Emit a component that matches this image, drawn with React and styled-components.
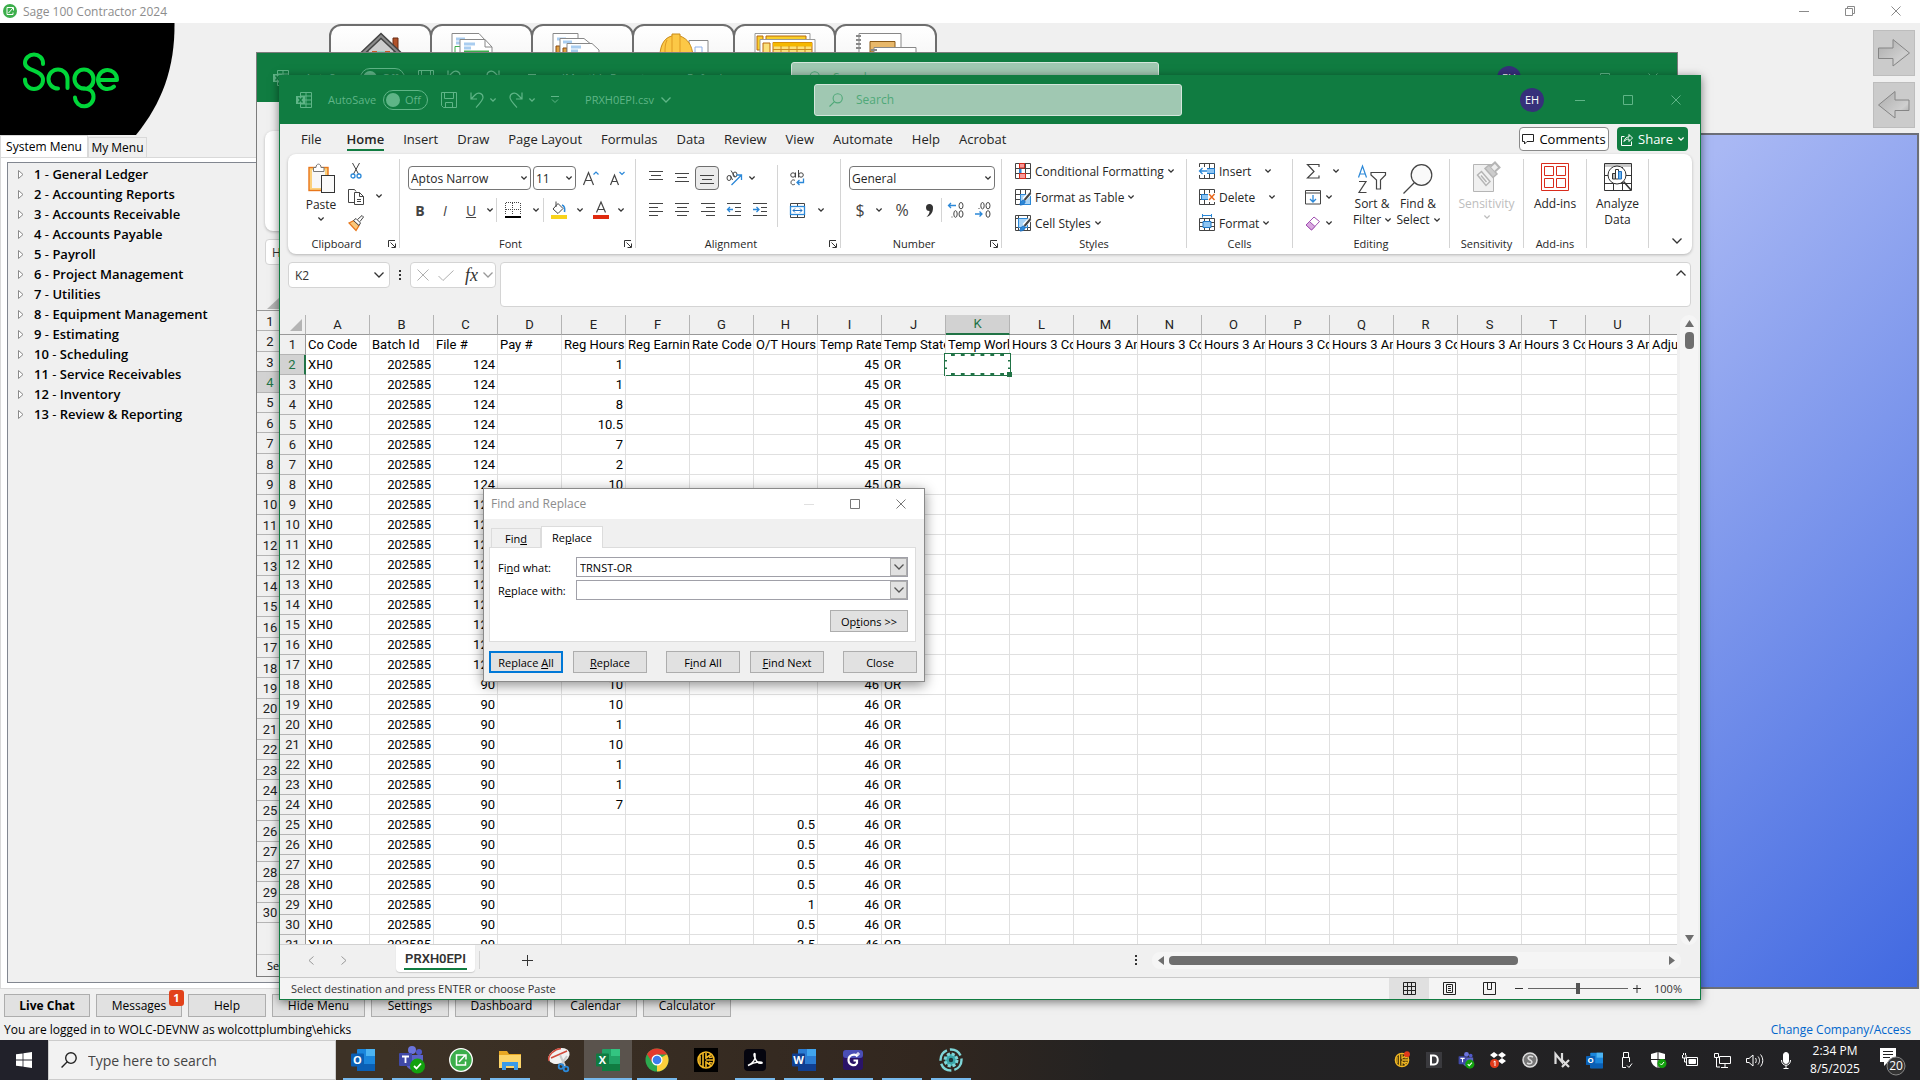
import { useState } from "react";
import styled, { createGlobalStyle, css } from "styled-components";

const UI_FONT = `"Open Sans", "Noto Sans", sans-serif`;
const CELL_FONT = `Roboto, "Liberation Sans", sans-serif`;

const MENU = [
  "General Ledger",
  "Accounting Reports",
  "Accounts Receivable",
  "Accounts Payable",
  "Payroll",
  "Project Management",
  "Utilities",
  "Equipment Management",
  "Estimating",
  "Scheduling",
  "Service Receivables",
  "Inventory",
  "Review & Reporting",
];

const RIBBON_TABS = [
  "File",
  "Home",
  "Insert",
  "Draw",
  "Page Layout",
  "Formulas",
  "Data",
  "Review",
  "View",
  "Automate",
  "Help",
  "Acrobat",
];

const COLUMNS = "ABCDEFGHIJKLMNOPQRSTUV".split("");

const HEADINGS = [
  "Co Code",
  "Batch Id",
  "File #",
  "Pay #",
  "Reg Hours",
  "Reg Earnings",
  "Rate Code",
  "O/T Hours",
  "Temp Rate",
  "Temp State",
  "Temp Work",
  "Hours 3 Code",
  "Hours 3 Amount",
  "Hours 3 Code",
  "Hours 3 Amount",
  "Hours 3 Code",
  "Hours 3 Amount",
  "Hours 3 Code",
  "Hours 3 Amount",
  "Hours 3 Code",
  "Hours 3 Amount",
  "Adjust",
];

const REG_HOURS = [
  1, 1, 8, 10.5, 7, 2, 10, 10, 8, 8, 10, 2, 8, 10, 1, 10, 10, 10, 1, 10, 1, 1, 7,
];
const OT_HOURS = [0.5, 0.5, 0.5, 0.5, 1, 0.5, 3.5];

function buildRows() {
  const rows = [HEADINGS];
  for (let n = 2; n <= 31; n++) {
    const row = COLUMNS.map(() => "");
    row[0] = "XH0";
    row[1] = 202585;
    row[2] = n < 18 ? 124 : 90;
    if (n < 25) row[4] = REG_HOURS[n - 2];
    else row[7] = OT_HOURS[n - 25];
    row[8] = n < 18 ? 45 : 46;
    row[9] = "OR";
    rows.push(row);
  }
  return rows;
}

const ROWS = buildRows();

/* ---------- icons ---------- */

const Svg = styled.svg`
  display: block;
  flex: none;
  overflow: visible;
  fill: none;
  stroke: ${(props) => props.$color || "#444"};
  stroke-width: ${(props) => props.$weight || 1};
`;

function Icon({ w = 16, h, color, weight, children }) {
  return (
    <Svg
      width={w}
      height={h || w}
      viewBox={`0 0 ${w} ${h || w}`}
      $color={color}
      $weight={weight}
      aria-hidden="true"
    >
      {children}
    </Svg>
  );
}

const Chevron = ({ color = "#333", big }) =>
  big ? (
    <Icon w={10} h={6} color={color} weight={1.3}>
      <path d="M0.5 0.5L5 5L9.5 0.5" />
    </Icon>
  ) : (
    <Icon w={6} h={4} color={color} weight={1.3}>
      <path d="M0.4 0.5L3 3.1L5.6 0.5" />
    </Icon>
  );

const MinIcon = ({ color }) => (
  <Icon w={10} color={color}>
    <path d="M0 5.5H10" />
  </Icon>
);
const MaxIcon = ({ color }) => (
  <Icon w={10} color={color}>
    <path d="M0.5 0.5H9.5V9.5H0.5Z" />
  </Icon>
);
const RestoreIcon = ({ color }) => (
  <Icon w={10} color={color}>
    <path d="M0.5 2.5H7.5V9.5H0.5ZM2.5 2V0.5H9.5V7.5H8" />
  </Icon>
);
const CloseIcon = ({ color }) => (
  <Icon w={10} color={color}>
    <path d="M0.5 0.5L9.5 9.5M9.5 0.5L0.5 9.5" />
  </Icon>
);

const ExcelMark = () => (
  <Icon w={16} color="#5fb587">
    <path d="M4.5 0.5H15.5V15.5H4.5V12M4.5 4V0.5M10 0.5V15.5M4.5 4H15.5M9 8H15.5M4.5 12H15.5" />
    <rect x="0" y="4" width="9" height="8" fill="#5fb587" stroke="none" />
    <path d="M2.5 5.5L6.5 10.5M6.5 5.5L2.5 10.5" stroke="#107c41" strokeWidth="1.4" />
  </Icon>
);
const SaveIcon = () => (
  <Icon w={16} color="#5fb587">
    <path d="M0.5 0.5H15.5V15.5H2.5L0.5 13.5ZM3.5 0.5V6.5H12.5V0.5M4.5 15.5V10.5H11.5V15.5" />
  </Icon>
);
const UndoIcon = () => (
  <Icon w={14} h={16} color="#5fb587" weight={1.2}>
    <path d="M1 0.5V7H7M1 7L5.5 2.5C8 0 13 1 13 5.5C13 8 11 10 6 15.5" />
  </Icon>
);
const RedoIcon = () => (
  <Icon w={14} h={16} color="#5fb587" weight={1.2}>
    <path d="M13 0.5V7H7M13 7L8.5 2.5C6 0 1 1 1 5.5C1 8 3 10 8 15.5" />
  </Icon>
);
const CustomizeIcon = () => (
  <Icon w={8} color="#5fb587">
    <path d="M0 0.5H8M1 3.5L4 6.5L7 3.5" />
  </Icon>
);
const SearchIcon = ({ w = 14, color, weight }) => (
  <Svg width={w} height={w} viewBox="0 0 14 14" $color={color} $weight={weight}>
    <circle cx="8.7" cy="5.3" r="4.6" />
    <path d="M5.5 8.6L0.5 13.5" />
  </Svg>
);

const PasteIcon = () => (
  <Icon w={28} h={30} color="#e8761a">
    <rect x="2" y="4.5" width="19" height="23" fill="#fbd07a" strokeWidth="1.4" />
    <rect x="5" y="7" width="13" height="18" fill="#f7f7f7" stroke="none" />
    <path d="M6.5 8.5V4.5H9C9 0 14 0 14 4.5H17V8.5Z" fill="#fff" stroke="#777" />
    <rect x="14.5" y="12.5" width="13" height="17" fill="#fafafa" stroke="#333" />
  </Icon>
);
const CutIcon = () => (
  <Icon w={12} h={16}>
    <path d="M2.5 0L8.5 11M9.5 0L3.5 11" />
    <circle cx="3" cy="13" r="2" stroke="#2b88d8" strokeWidth="1.3" />
    <circle cx="9" cy="13" r="2" stroke="#2b88d8" strokeWidth="1.3" />
  </Icon>
);
const CopyIcon = () => (
  <Icon w={16}>
    <path d="M6 13.5H0.5V0.5H6.5L8 2.5" />
    <path d="M6.5 3.5H11.5L15.5 7.5V15.5H6.5ZM11.5 3.5V7.5H15.5M9 10.5H13M9 12.5H13" />
  </Icon>
);
const BrushIcon = () => (
  <Icon w={16}>
    <path d="M1 8L6 5.5L11 10.5L8 15.5Z" fill="#fbc77a" stroke="#e8761a" strokeWidth="1.3" />
    <path d="M5.5 5.5L8 3.5L12.5 8L11 10.5Z" fill="#fff" />
    <path d="M9.5 4.5L14 0.5L15.5 2L12 6.5" />
  </Icon>
);
const GrowA = () => (
  <Icon w={16} weight={1.2}>
    <path d="M0.5 15L5.5 2.5L10.5 15M2.5 10.5H8.5" />
    <path d="M10.5 4.5L13 2L15.5 4.5" stroke="#2b88d8" />
  </Icon>
);
const ShrinkA = () => (
  <Icon w={16} weight={1.2}>
    <path d="M1.5 15L5.5 5L9.5 15M3 11.5H8" />
    <path d="M10.5 2L13 4.5L15.5 2" stroke="#2b88d8" />
  </Icon>
);
const BordersIcon = () => (
  <Icon w={16}>
    <path d="M0.5 1V13M15.5 1V13M1 0.5H15M7.5 1V13M1 7.5H15" strokeDasharray="1 1" />
    <path d="M0 15H16" stroke="#000" strokeWidth="2" />
  </Icon>
);
const BucketIcon = () => (
  <Icon w={16} h={18}>
    <path d="M2 8L7 2.5L12 7.5L7 12.5ZM5 0.5V6" />
    <path d="M11 4C14 5 14 8 13.5 11" stroke="#2b88d8" strokeWidth="1.6" />
    <rect x="0" y="14" width="16" height="4" fill="#f9d31c" stroke="none" />
  </Icon>
);
const FontColorIcon = () => (
  <Icon w={16} h={18}>
    <path d="M3.5 11.5L8 1L12.5 11.5M5 8.5H11" strokeWidth="1.2" />
    <rect x="0" y="14" width="16" height="4" fill="#e02b0f" stroke="none" />
  </Icon>
);

// Horizontal strokes of an alignment glyph, each given as [start, end]
const Lines = ({ rows, top = 0, gap = 4 }) => (
  <Icon w={14} h={14}>
    {rows.map(([a, b], i) => (
      <path key={i} d={`M${a} ${top + i * gap + 0.5}H${b}`} />
    ))}
  </Icon>
);
const MIDDLE = [[0, 14], [2, 12], [0, 14]];
const LEFT = [[0, 14], [0, 9], [0, 14], [0, 9]];
const CENTER = [[0, 14], [2, 12], [0, 14], [2, 12]];
const RIGHT = [[0, 14], [5, 14], [0, 14], [5, 14]];

const OrientIcon = () => (
  <Icon w={16}>
    <ellipse cx="3" cy="8" rx="2" ry="2.5" />
    <path d="M4.5 5.5L6.5 10M5 0.5L9 7" />
    <ellipse cx="9" cy="4.5" rx="2" ry="2.5" />
    <path d="M5.5 15L15 5.5M10.5 5H15.5V10" stroke="#2b88d8" strokeWidth="1.3" />
  </Icon>
);
const WrapIcon = () => (
  <Icon w={14} h={16}>
    <ellipse cx="3" cy="5" rx="2.3" ry="2.2" />
    <path d="M5.5 2.5V7.5M8.5 0V7.5M5 10.5C3 9 1 10.5 1 12.5S3 15.5 5 14" />
    <ellipse cx="11" cy="5" rx="2.3" ry="2.2" />
    <path d="M13.5 8.5V12.5H7M9.5 10L7 12.5L9.5 15" stroke="#2b88d8" strokeWidth="1.3" />
  </Icon>
);
const IndentIcon = ({ flip }) => (
  <Icon w={14}>
    <path d="M0 0.5H14M8 4.5H14M8 8.5H14M0 12.5H14" />
    <path
      d={flip ? "M0 6.5H6M3.5 4L6 6.5L3.5 9" : "M0.5 6.5H6M3 4L0.5 6.5L3 9"}
      stroke="#2b88d8"
      strokeWidth="1.3"
    />
  </Icon>
);
const MergeIcon = () => (
  <Icon w={15}>
    <path d="M0.5 0.5H14.5V14.5H0.5ZM7.5 0.5V3.5M7.5 11.5V14.5" />
    <rect x="0.5" y="3.5" width="14" height="8" fill="#fff" stroke="#2b88d8" strokeWidth="1.3" />
    <path d="M3 7.5H12M5 5.5L3 7.5L5 9.5M10 5.5L12 7.5L10 9.5" stroke="#1f6fc0" />
  </Icon>
);
const DecimalIcon = ({ less }) => (
  <Icon w={16}>
    {less ? (
      <>
        <path d="M0 12H7M4.5 9.5L7 12L4.5 14.5" stroke="#2b88d8" strokeWidth="1.3" />
        <ellipse cx="13" cy="12" rx="2" ry="3.3" />
        <ellipse cx="7.5" cy="3.7" rx="1.7" ry="3.2" />
        <ellipse cx="13" cy="3.7" rx="2" ry="3.2" />
        <path d="M3.5 6.5H4.5" />
      </>
    ) : (
      <>
        <path d="M0.5 3.5H8M3 1L0.5 3.5L3 6" stroke="#2b88d8" strokeWidth="1.3" />
        <ellipse cx="13" cy="3.7" rx="2" ry="3.2" />
        <ellipse cx="7.5" cy="12" rx="1.7" ry="3.3" />
        <ellipse cx="13" cy="12" rx="2" ry="3.3" />
        <path d="M3.5 15H4.5" />
      </>
    )}
  </Icon>
);
const GridBase = () => (
  <path d="M0.5 0.5H15.5V15.5H0.5ZM5.5 0.5V15.5M10.5 0.5V15.5M0.5 5.5H15.5M0.5 10.5H15.5" />
);
const CondIcon = () => (
  <Icon w={16}>
    <GridBase />
    <path d="M4.5 0.5H9.5V5H4.5ZM4.5 10.5H10.5V15.5H4.5Z" fill="#f79a9a" stroke="#d92b1c" />
    <path d="M4 6H6.5V10H4Z" fill="#2b88d8" stroke="none" />
  </Icon>
);
const PaintTableIcon = ({ full }) => (
  <Icon w={16}>
    {full ? (
      <path d="M0.5 0.5H15.5V15.5H0.5ZM0.5 3.5H15.5M3.5 0.5V15.5M12.5 0.5V15.5M0.5 12.5H15.5" />
    ) : (
      <GridBase />
    )}
    <path
      d={full ? "M3.5 3.5H12.5V12.5H3.5Z" : "M5.5 5.5H15.5V15.5H5.5Z"}
      fill="#a9d3f5"
      stroke="#2b88d8"
    />
    <path d="M15.5 4L9 10.5" stroke="#fff" strokeWidth="4" />
    <path d="M15.5 4L9.5 11" strokeWidth="2" />
    <path d="M5 16C5 13 7 10.5 9.5 11.5C11 13.5 9 16 5 16Z" fill="#2b88d8" stroke="#1f6fc0" />
  </Icon>
);
const CellInsertIcon = () => (
  <Icon w={16}>
    <GridBase />
    <path d="M6 5.5H15.5V10.5H6Z" fill="#8ec5f2" stroke="#1f78c8" />
    <path d="M0 4H8V12H0Z" fill="#fff" stroke="none" />
    <path d="M0.5 8H8M3.5 5L0.5 8L3.5 11" stroke="#2b88d8" strokeWidth="1.3" />
  </Icon>
);
const CellDeleteIcon = () => (
  <Icon w={16}>
    <GridBase />
    <path d="M2.5 5.5H9.5V10.5H2.5Z" fill="#8ec5f2" stroke="#1f78c8" />
    <path d="M9 4H16V13H9Z" fill="#fff" stroke="none" />
    <path d="M10 5L15.5 11M15.5 5L10 11" stroke="#e8661a" strokeWidth="1.4" />
  </Icon>
);
const CellFormatIcon = () => (
  <Icon w={16} h={18}>
    <path d="M0.5 4.5H15.5V16.5H0.5ZM5.5 4.5V16.5M10.5 4.5V16.5M0.5 8.5H15.5M0.5 12.5H15.5" />
    <path d="M4 7.5H12V13.5H4Z" fill="#8ec5f2" stroke="#1f78c8" />
    <path d="M3.5 1.5H12.5M3.5 0V3.5M12.5 0V3.5" stroke="#2b88d8" />
  </Icon>
);
const SumIcon = () => (
  <Icon w={13} h={15} weight={1.2}>
    <path d="M12 3V0.5H0.5L7 7.5L0.5 14H12V11.5" />
  </Icon>
);
const FillIcon = () => (
  <Icon w={16} h={15}>
    <path d="M0.5 0.5H15.5V14H0.5ZM0.5 3H15.5" />
    <path d="M8 5V12M5 9L8 12L11 9" stroke="#2b88d8" strokeWidth="1.3" />
  </Icon>
);
const EraserIcon = () => (
  <Icon w={16} h={15} color="#a04fb0">
    <path d="M1 9L9 1L14.5 5.5L6.5 14Z" fill="#fff" />
    <path d="M1 9L4.5 5.5L10 10.5L6.5 14Z" fill="#d9a8e0" />
  </Icon>
);
const SortIcon = () => (
  <Icon w={28} h={29} weight={1.2}>
    <path d="M0.5 12.5L4.5 1L8.5 12.5M2 9H7.5" stroke="#2b88d8" />
    <path d="M1 16.5H8L1 27.5H8.5" />
    <path d="M13 7.5H27.5V10L22.5 15V24H18.5V15L13 10Z" />
  </Icon>
);
const FindIcon = () => (
  <Icon w={30} h={30} weight={1.2}>
    <circle cx="18.5" cy="11" r="10.3" fill="#fafafa" />
    <path d="M11.5 18.5L0.5 29.5" />
  </Icon>
);
const SensitivityIcon = () => (
  <Icon w={28} h={32} color="#b5b5b5">
    <path d="M0.5 3.5H20.5V30.5H0.5Z" fill="#f0f0f0" />
    <path d="M4.5 14L8.5 10.5L17 20.5L13 24.5Z" fill="#f4f4f4" strokeWidth="1.5" />
    <path d="M8 14.5L13.5 21" strokeWidth="1.5" />
    <path d="M12 7.5L16 4L24 13L20 16.5Z" fill="#ccc" strokeWidth="1.5" />
    <path d="M17.5 5.5L22 1.5L26.5 6.5L22 10.5" fill="#eee" strokeWidth="2" />
  </Icon>
);
const AddinsIcon = () => (
  <Icon w={28} color="#d92b1c">
    <path d="M0.5 0.5H27.5V27.5H0.5ZM3.5 3.5H12.5V12.5H3.5ZM15.5 3.5H24.5V12.5H15.5ZM3.5 15.5H12.5V24.5H3.5ZM15.5 15.5H24.5V24.5H15.5Z" />
  </Icon>
);
const AnalyzeIcon = () => (
  <Icon w={28} color="#333">
    <path d="M0.5 0.5H27.5V27.5H0.5ZM0.5 12.5H27.5M0.5 20.5H27.5M9.5 4V27M18.5 4V27" />
    <rect x="1" y="1" width="26" height="3" fill="#c8c8c8" stroke="none" />
    <circle cx="13" cy="12" r="9" fill="#fff" />
    <path d="M19.5 18.5L27 27" strokeWidth="1.6" />
    <path d="M8.5 10.5H11.5V16H8.5Z" fill="#bbb" />
    <path d="M11.5 6.5H14.5V16H11.5Z" fill="#fff" />
    <path d="M14.5 8.5H17.5V16H14.5Z" fill="#6bb5f0" stroke="#1f6fc0" />
  </Icon>
);
const LauncherIcon = () => (
  <Icon w={8} color="#333">
    <path d="M0.5 7V0.5H7M2.5 2.5L7 7M7.5 3.5V7.5H3.5" />
  </Icon>
);
const CommentIcon = () => (
  <Icon w={12} h={11} color="#222">
    <path d="M0.5 0.5H11.5V7.5H5L2.5 10V7.5H0.5Z" />
  </Icon>
);
const ShareIcon = () => (
  <Icon w={12} h={13} color="#fff">
    <path d="M3.5 3.5H0.5V12.5H10.5V8.5" />
    <path d="M3 8.5C3.5 5.5 5.5 4 8 4V1.5L11.5 5L8 8.5V6C6 6 4.5 6.5 3 8.5Z" />
  </Icon>
);
const DotsIcon = () => (
  <Icon w={2} h={10} color="none">
    <path d="M0 0H2V2H0ZM0 4H2V6H0ZM0 8H2V10H0Z" fill="#333" />
  </Icon>
);

const SageMark = () => (
  <Icon w={14} color="#fff">
    <circle cx="7" cy="7" r="7" fill="#3cae4b" stroke="none" />
    <path d="M8.5 3.5H4V10.5H10V8.5M5.5 9L10 4M7.5 3.5H10.5V6.5" />
  </Icon>
);

const SageLogo = () => (
  <Icon w={175} h={112} color="#00d639">
    <path d="M0 0H174.5C175 45 162 80 136 112H0Z" fill="#000" stroke="none" />
    <g strokeWidth="4" strokeLinecap="round" strokeLinejoin="round">
      <path d="M43 41V40A9 8.5 0 0 0 25 40C25 48.5 43 46.5 43 57A9 9 0 0 1 25 57V56.5" />
      <path d="M67.5 65V56A9.5 9.5 0 1 0 58 65.5" />
      <path d="M84 65.5A9.5 9.5 0 1 1 93.5 56C93.5 60 91.5 63.5 88 65" />
      <path d="M84 65.5C90 65.5 93.5 69 93.5 73.5A9 9 0 0 1 75 74.5" />
      <path d="M100 57H117A9.5 9.5 0 1 0 114 63.5" />
    </g>
  </Icon>
);

const ArrowArt = ({ flip }) => (
  <Icon w={32} h={28} color="#858585">
    <defs>
      <linearGradient id="arrowFill" x1="0" y1="0" x2="1" y2="1">
        <stop offset="0" stopColor="#ababab" />
        <stop offset="0.7" stopColor="#cfcfcf" />
        <stop offset="1" stopColor="#9c9c9c" />
      </linearGradient>
    </defs>
    <path
      d={
        flip
          ? "M31 9H17V0.5L0.5 14L17 27V19.5H31Z"
          : "M0.5 9H15V0.5L31.5 14L15 27V19.5H0.5Z"
      }
      fill="url(#arrowFill)"
    />
  </Icon>
);

/* ---------- page and Sage window ---------- */

const GlobalStyle = createGlobalStyle`
  * {
    box-sizing: border-box;
  }
  body {
    margin: 0;
    overflow: hidden;
    font-family: ${UI_FONT};
    font-size: 12px;
    color: #000;
  }
  button, input, select {
    font: inherit;
    color: inherit;
    padding: 0;
    margin: 0;
  }
`;

const Desktop = styled.div`
  position: relative;
  height: 100vh;
  display: flex;
  flex-direction: column;
  background: #f0f0f0;
`;

const PlainButton = styled.button`
  border: 0;
  background: none;
  display: flex;
  align-items: center;
  justify-content: center;
`;

const SageTitle = styled.header`
  height: 23px;
  flex: none;
  display: flex;
  align-items: center;
  gap: 6px;
  padding: 0 1px 1px 3px;
  background: #fff;
  color: #8c8c8c;
`;

const WindowButtons = styled.div`
  margin-left: auto;
  display: flex;
  align-self: stretch;
  ${PlainButton} {
    width: ${(props) => props.$w}px;
  }
`;

const SageHeader = styled.div`
  height: 110px;
  flex: none;
  display: flex;
`;

const Shortcuts = styled.div`
  display: flex;
  margin-left: 154px;
  padding-top: 1px;
`;

const Shortcut = styled(PlainButton)`
  width: 103px;
  margin-right: -2px;
  height: 104px;
  border: 2px solid #6e6e6e;
  border-radius: 12px 12px 0 0;
  background: linear-gradient(#fff, #e4e4e4);
  align-items: flex-start;
  padding-top: 6px;
`;

const Arrows = styled.div`
  margin-left: auto;
  padding: 7px 5px 0 0;
  display: flex;
  flex-direction: column;
  gap: 6px;
`;

const ArrowButton = styled(PlainButton)`
  width: 42px;
  height: 46px;
  background: #cbcbcb;
  border: 1px solid #bdbdbd;
`;

const SageBody = styled.div`
  flex: 1;
  min-height: 0;
  display: flex;
`;

const Side = styled.nav`
  width: 300px;
  flex: none;
  padding-top: 2px;
  display: flex;
  flex-direction: column;
`;

const SideTabs = styled.div`
  display: flex;
  align-items: flex-end;
  height: 22px;
`;

const SideTab = styled.button`
  height: ${(props) => (props.$active ? 22 : 20)}px;
  width: ${(props) => (props.$active ? 88 : 59)}px;
  border: 1px solid #d9d9d9;
  border-bottom: 0;
  background: ${(props) => (props.$active ? "#fff" : "#f0f0f0")};
  white-space: nowrap;
`;

const SidePage = styled.div`
  flex: 1;
  border: 1px solid #d9d9d9;
  background: #fff;
  padding: 4px 0 5px 6px;
  display: flex;
`;

const Tree = styled.ul`
  flex: 1;
  list-style: none;
  margin: 0;
  padding: 1px 0 0 10px;
  border: 1px solid #828790;
  background: #f0f0f0;
`;

const TreeItem = styled.li`
  height: 20px;
  display: flex;
  align-items: center;
  gap: 10px;
  font-size: 13px;
  font-weight: 600;
  white-space: pre;
  span {
    font-weight: 400;
  }
`;

const Canvas = styled.main`
  flex: 1;
  border: 2px solid #6c6f78;
  margin-right: 1px;
  background: linear-gradient(135deg, #a9b8f4 58%, #4169e1);
`;

const Footer = styled.div`
  flex: none;
  height: 51px;
  padding: 5px 4px 0;
`;

const FooterButtons = styled.div`
  display: flex;
  gap: 6px;
`;

const FooterButton = styled.button`
  position: relative;
  width: ${(props) => props.$w}px;
  height: 23px;
  border: 1px solid #adadad;
  background: #e1e1e1;
  font-weight: ${(props) => (props.$bold ? 700 : 400)};
`;

const Badge = styled.span`
  position: absolute;
  top: -5px;
  right: -3px;
  width: 15px;
  height: 16px;
  border-radius: 3px;
  background: #e2421b;
  color: #fff;
  font-size: 11px;
  line-height: 16px;
  font-weight: 700;
`;

const LoginLine = styled.div`
  display: flex;
  justify-content: space-between;
  padding-right: 5px;
  line-height: 25px;
  a {
    color: #0066cc;
    text-decoration: none;
  }
`;

/* ---------- Excel windows ---------- */

const ExcelWindow = styled.section`
  position: absolute;
  display: flex;
  flex-direction: column;
  background: #f0f0f0;
  ${(props) =>
    props.$back
      ? css`
          top: 52px;
          left: 256px;
          right: 242px;
          bottom: 103px;
          border: 1px solid #7c7c7c;
        `
      : css`
          top: 75px;
          left: 279px;
          right: 219px;
          bottom: 80px;
          border: 1px solid #107c41;
          border-top: 0;
          box-shadow: 0 2px 9px rgba(0, 0, 0, 0.5);
        `}
`;

const Title = styled.header`
  height: 49px;
  flex: none;
  display: flex;
  align-items: center;
  background: #107c41;
  color: #5fb587;
`;

const TitleLeft = styled.div`
  flex: 0 0 534px;
  display: flex;
  align-items: center;
  padding-left: 16px;
`;

const AutoSave = styled.label`
  display: flex;
  align-items: center;
  gap: 7px;
  margin: 0 13px 0 16px;
  font-size: 11px;
`;

const Toggle = styled.button`
  width: 45px;
  height: 20px;
  border: 1px solid #5fb587;
  border-radius: 10px;
  background: none;
  display: flex;
  align-items: center;
  gap: 5px;
  padding-left: 2px;
  &::before {
    content: "";
    width: 14px;
    height: 14px;
    border-radius: 50%;
    background: #5fb587;
  }
`;

const TitleTool = styled(PlainButton)`
  width: 26px;
  height: 24px;
  margin-left: 7px;
`;

const SaveTool = styled(PlainButton)`
  height: 24px;
`;

const FileName = styled.span`
  display: flex;
  align-items: center;
  gap: 7px;
  margin-left: 17px;
  font-size: 11px;
  white-space: nowrap;
`;

const TitleSearch = styled.label`
  flex: 0 1 368px;
  height: 32px;
  display: flex;
  align-items: center;
  gap: 13px;
  padding: 0 14px;
  border: 1px solid #d4e6dc;
  border-radius: 3px;
  background: #a0c8b2;
  input {
    flex: 1;
    min-width: 0;
    border: 0;
    background: none;
    outline: 0;
    &::placeholder {
      color: #4fa878;
      opacity: 1;
    }
  }
`;

const Avatar = styled.span`
  margin: 0 12px 0 auto;
  width: 24px;
  height: 24px;
  border-radius: 50%;
  background: #36307a;
  color: #fff;
  font-size: 11px;
  line-height: 24px;
  text-align: center;
`;

const ExcelButtons = styled(WindowButtons)`
  margin-left: 0;
`;

const TabsBar = styled.nav`
  height: 30px;
  flex: none;
  display: flex;
  align-items: center;
  gap: 19px;
  padding: 0 12px 0 21px;
`;

const RibbonTab = styled.button`
  border: 0;
  background: none;
  height: 24px;
  padding-top: 2px;
  font-size: 13px;
  color: #242424;
  white-space: nowrap;
  border-bottom: 2px solid ${(props) => (props.$active ? "#107c41" : "transparent")};
  font-weight: ${(props) => (props.$active ? 600 : 400)};
  &:first-child {
    margin-right: 6px;
  }
`;

const TopAction = styled(PlainButton)`
  height: 24px;
  gap: 5px;
  border-radius: 4px;
  font-size: 13px;
  ${(props) =>
    props.$share
      ? css`
          width: 71px;
          background: #107c41;
          color: #fff;
        `
      : css`
          width: 90px;
          margin: 0 -11px 0 auto;
          background: #fff;
          border: 1px solid #8a8a8a;
        `}
`;

const Ribbon = styled.div`
  flex: none;
  height: 100px;
  margin: 0 8px;
  display: flex;
  background: #fff;
  border-radius: 8px;
  box-shadow: 0 1px 3px rgba(0, 0, 0, 0.25);
`;

const Group = styled.div`
  position: relative;
  width: ${(props) => props.$w}px;
  flex: none;
  margin: 5px 0 6px;
  border-right: 1px solid #d4d4d4;
  display: flex;
  justify-content: ${(props) => props.$justify || "flex-start"};
  color: #262626;
`;

const GroupName = styled.span`
  position: absolute;
  left: 0;
  right: ${(props) => (props.$launcher ? 14 : 0)}px;
  bottom: -4px;
  line-height: 16px;
  font-size: 11px;
  text-align: center;
`;

const Launcher = styled(PlainButton)`
  position: absolute;
  right: 3px;
  bottom: 0;
`;

const ToolColumn = styled.div`
  display: flex;
  flex-direction: column;
  gap: ${(props) => props.$gap || 0}px;
  padding: ${(props) => props.$pad || "7px 0 0 8px"};
`;

const ToolRow = styled.div`
  display: flex;
  flex: none;
  align-items: center;
  height: 24px;
`;

const Tool = styled(PlainButton)`
  flex: none;
  width: ${(props) => props.$w || 26}px;
  height: 24px;
  font-size: ${(props) => props.$size || 14}px;
  color: #444;
  ${(props) =>
    props.$on &&
    css`
      background: #ebebeb;
      border: 1px solid #6e6e6e;
      border-radius: 4px;
    `}
`;

const Rule = styled.span`
  width: 1px;
  height: ${(props) => props.$h || 24}px;
  background: #d4d4d4;
`;

const BigTool = styled.button`
  width: ${(props) => props.$w}px;
  margin-left: ${(props) => props.$left || 0}px;
  border: 0;
  background: none;
  display: flex;
  flex-direction: column;
  align-items: center;
  padding-top: ${(props) => props.$top || 4}px;
  gap: ${(props) => props.$gap || 4}px;
  line-height: 16px;
  color: ${(props) => (props.$off ? "#bdbdbd" : "#262626")};
  span {
    display: flex;
    align-items: center;
    gap: 4px;
    white-space: nowrap;
  }
`;

const TextTool = styled.button`
  display: flex;
  flex: none;
  align-items: center;
  gap: 4px;
  height: 24px;
  border: 0;
  background: none;
  white-space: nowrap;
  svg + span {
    min-width: ${(props) => props.$min || 0}px;
    text-align: left;
  }
`;

const SelectBox = styled.span`
  display: flex;
  align-items: center;
  width: ${(props) => props.$w}px;
  height: 24px;
  margin-right: 2px;
  padding: 0 3px 0 2px;
  border: 1px solid #767676;
  border-radius: 4px;
  background: #fff;
  select {
    appearance: none;
    flex: 1;
    min-width: 0;
    border: 0;
    background: none;
    outline: 0;
  }
`;

const CollapseRibbon = styled(PlainButton)`
  margin: auto 10px 10px auto;
`;

const FormulaRow = styled.div`
  flex: none;
  display: flex;
  align-items: flex-start;
  padding: 8px 9px 8px 8px;
`;

const FieldBox = styled.div`
  width: ${(props) => props.$w || 102}px;
  flex: none;
  height: 26px;
  display: flex;
  align-items: center;
  border: 1px solid #d4d4d4;
  border-radius: 4px;
  background: #fff;
  padding: ${(props) => (props.$tight ? "0 0 0 6px" : "0 5px 0 6px")};
  input {
    flex: 1;
    min-width: 0;
    border: 0;
    outline: 0;
    color: #333;
  }
`;

const FxIcon = styled.i`
  flex: none;
  width: 17px;
  text-align: center;
  font-family: "Liberation Serif", serif;
  font-size: 18px;
  line-height: 20px;
  color: #333;
`;

const Dots = styled.span`
  flex: none;
  width: ${(props) => props.$w || 20}px;
  height: 26px;
  display: flex;
  align-items: center;
  justify-content: center;
`;

const FormulaInput = styled.label`
  flex: 1;
  height: 45px;
  margin-left: 4px;
  display: flex;
  align-items: flex-start;
  border: 1px solid #d4d4d4;
  border-radius: 4px;
  background: #fff;
  padding: 7px 4px 0 6px;
  input {
    flex: 1;
    border: 0;
    outline: 0;
  }
`;

const SheetArea = styled.div`
  flex: 1;
  min-height: 0;
  display: flex;
`;

const SheetClip = styled.div`
  flex: 1;
  min-width: 0;
  overflow: hidden;
  background: #fff;
  border-bottom: 1px solid #d0d0d0;
`;

const Sheet = styled.table`
  table-layout: fixed;
  border-collapse: separate;
  border-spacing: 0;
  width: 1434px;
  font-family: ${CELL_FONT};
  font-size: 13px;
  line-height: 18px;
  col {
    width: 64px;
  }
  col:first-child {
    width: 26px;
  }
`;

const ColHead = styled.th`
  height: 20px;
  padding: 0;
  line-height: 18px;
  font-weight: 400;
  background: ${(props) => (props.$on ? "#d2d2d2" : "#f0f0f0")};
  color: ${(props) => (props.$on ? "#217346" : "#222")};
  border-right: 1px solid #b4b4b4;
  border-bottom: ${(props) => (props.$on ? "2px solid #217346" : "1px solid #999")};
`;

const RowHead = styled(ColHead)`
  padding-top: 1px;
  border-bottom: 1px solid #b4b4b4;
  border-right: ${(props) => (props.$on ? "2px solid #217346" : "1px solid #999")};
`;

const Cell = styled.td`
  position: relative;
  height: 20px;
  padding: 1px 2px 0;
  overflow: hidden;
  white-space: nowrap;
  text-align: ${(props) => (props.$num ? "right" : "left")};
  border-right: 1px solid #e0e0e0;
  border-bottom: 1px solid #e0e0e0;
  ${(props) =>
    props.$picked &&
    css`
      overflow: visible;
      &::before {
        content: "";
        position: absolute;
        inset: -2px;
        border: 3px solid #217346;
      }
      &::after {
        content: "";
        position: absolute;
        inset: -1px;
        border: 2px dashed #fff;
      }
    `}
`;

const FillHandle = styled.span`
  position: absolute;
  z-index: 1;
  right: -3px;
  bottom: -3px;
  width: 5px;
  height: 5px;
  background: #217346;
`;

const VScroll = styled.div`
  width: 18px;
  margin: 0 2px 0 3px;
  display: flex;
  flex-direction: column;
  align-items: center;
  justify-content: space-between;
  padding: 5px 0 3px;
  background: #f5f5f5;
  border-radius: 9px;
`;

const VThumb = styled.div`
  width: 9px;
  height: 17px;
  border-radius: 4px;
  background: #6e6e6e;
  margin: 5px 0 auto;
`;

const TabStrip = styled.div`
  flex: none;
  height: 32px;
  display: flex;
  align-items: center;
  padding: 0 19px 2px 28px;
`;

const SheetTab = styled.button`
  align-self: flex-start;
  width: 79px;
  height: 27px;
  margin: 0 4px 0 49px;
  padding: 1px 8px 0;
  border: 0;
  border-radius: 0 0 4px 4px;
  background: #fff;
  box-shadow: 0 1px 1px #ccc;
  color: #333;
  span {
    display: block;
    border-bottom: 2px solid #107c41;
    font-family: ${CELL_FONT};
    font-size: 13px;
    font-weight: 600;
    line-height: 19px;
  }
`;

const NewSheet = styled(PlainButton)`
  margin: 0 auto 0 42px;
`;

const HScroll = styled.div`
  flex: 0 1 529px;
  height: 17px;
  display: flex;
  align-items: center;
  padding: 0 6px;
  border-radius: 8px;
  background: #f5f5f5;
  div {
    width: 349px;
    height: 9px;
    margin: 0 auto 0 5px;
    border-radius: 4px;
    background: #6e6e6e;
  }
`;

const StatusBar = styled.footer`
  flex: none;
  height: 22px;
  display: flex;
  align-items: center;
  padding: 0 18px 0 11px;
  border-top: 1px solid #c8c8c8;
  background: #f4f4f4;
  font-size: 11px;
  color: #333;
`;

const StatusTools = styled.div`
  margin-left: auto;
  align-self: stretch;
  display: flex;
  align-items: center;
`;

const ViewButton = styled(PlainButton)`
  width: 40px;
  align-self: stretch;
  background: ${(props) => (props.$on ? "#e0e0e0" : "none")};
`;

const ZoomBox = styled.div`
  display: flex;
  align-items: center;
  gap: 5px;
  margin: 0 13px 0 6px;
`;

const ZoomRange = styled.input`
  appearance: none;
  width: 100px;
  height: 17px;
  background: linear-gradient(#666, #666) center / 100% 1px no-repeat;
  &::-webkit-slider-thumb {
    appearance: none;
    width: 4px;
    height: 11px;
    background: #555;
  }
`;

/* ---------- what shows of the back window ---------- */

const BackRibbon = styled.div`
  height: 100px;
  margin: 29px 8px 0;
  border-radius: 8px;
  background: #fff;
  box-shadow: 0 1px 3px rgba(0, 0, 0, 0.25);
  flex: none;
`;

const BackRows = styled.ol`
  list-style: none;
  margin: 0;
  padding: 0;
  width: 26px;
  height: 612px;
  flex: none;
  display: flex;
  flex-direction: column;
  font-family: ${CELL_FONT};
  font-size: 13px;
`;

const BackRow = styled.li`
  flex: 1;
  display: flex;
  align-items: center;
  justify-content: center;
  padding-top: 1px;
  border-bottom: 1px solid #b4b4b4;
  background: ${(props) => (props.$on ? "#d2d2d2" : "#f0f0f0")};
  color: ${(props) => (props.$on ? "#217346" : "#222")};
`;

const BackCorner = styled.div`
  height: 38px;
  flex: none;
  padding: 24px 0 0 10px;
  border-bottom: 1px solid #999;
`;

const BackStatus = styled.div`
  margin-top: auto;
  height: 22px;
  padding-left: 10px;
  line-height: 21px;
  border-top: 1px solid #c8c8c8;
  font-size: 11px;
`;

/* ---------- dialog ---------- */

const Dialog = styled.form`
  position: absolute;
  left: 483px;
  top: 488px;
  width: 442px;
  background: #f0f0f0;
  border: 1px solid #8a8a8a;
  box-shadow: 0 3px 12px rgba(0, 0, 0, 0.45);
  font-size: 11px;
`;

const DialogTitle = styled.div`
  height: 30px;
  display: flex;
  align-items: center;
  padding: 0 0 1px 7px;
  background: #fff;
  color: #8c8c8c;
  font-size: 12px;
`;

const DialogTabs = styled.div`
  display: flex;
  align-items: flex-end;
  height: 28px;
  padding-left: 7px;
`;

const DialogTab = styled.button`
  height: ${(props) => (props.$active ? 22 : 19)}px;
  width: ${(props) => (props.$active ? 62 : 50)}px;
  border: 1px solid #dcdcdc;
  border-bottom: 0;
  margin-bottom: ${(props) => (props.$active ? -1 : 0)}px;
  background: ${(props) => (props.$active ? "#fff" : "#f0f0f0")};
`;

const DialogPage = styled.div`
  margin: 0 8px 0 5px;
  padding: 9px 7px 9px 8px;
  background: #fff;
  border: 1px solid #dcdcdc;
`;

const Field = styled.div`
  display: flex;
  align-items: center;
  margin-bottom: 3px;
  label {
    width: 78px;
  }
`;

const Combo = styled.div`
  flex: 1;
  height: 20px;
  display: flex;
  border: 1px solid #a0a0a8;
  background: #fff;
  input {
    flex: 1;
    min-width: 0;
    border: 0;
    padding: 0 3px;
    outline: 0;
  }
`;

const ComboArrow = styled(PlainButton)`
  width: 17px;
  border: 1px solid #adadad;
  background: #e1e1e1;
`;

const DialogButton = styled.button`
  width: ${(props) => props.$w || 74}px;
  height: 22px;
  border: ${(props) => (props.$primary ? "2px solid #0078d7" : "1px solid #adadad")};
  background: #e1e1e1;
  white-space: nowrap;
`;

const OptionsRow = styled.div`
  display: flex;
  justify-content: flex-end;
  margin-top: 10px;
`;

const DialogActions = styled.div`
  display: flex;
  padding: 9px 7px 8px 5px;
  gap: 10px;
  ${DialogButton}:nth-child(3),
  ${DialogButton}:nth-child(5) {
    margin-left: 9px;
  }
`;

/* ---------- taskbar ---------- */

const Taskbar = styled.footer`
  flex: none;
  height: 40px;
  display: flex;
  align-items: stretch;
  background: linear-gradient(90deg, #3d3226 20%, #32271f 48%, #232222 58%, #222225 100%);
`;

const StartButton = styled(PlainButton)`
  width: 48px;
  background: #21212a;
`;

const TaskSearch = styled.label`
  width: 288px;
  display: flex;
  align-items: center;
  gap: 11px;
  padding-left: 12px;
  background: #f2f2f2;
  border: 1px solid #ccc;
  input {
    width: 220px;
    border: 0;
    background: none;
    font-size: 14px;
    outline: 0;
    &::placeholder {
      color: #444;
      opacity: 1;
    }
  }
`;

const Apps = styled.div`
  display: flex;
  gap: 1px;
  padding-left: 3px;
`;

const AppButton = styled(PlainButton)`
  position: relative;
  width: 48px;
  background: ${(props) => (props.$active ? "#5a534d" : "none")};
  &::after {
    content: "";
    position: absolute;
    left: ${(props) => (props.$active ? 0 : 4)}px;
    right: ${(props) => (props.$active ? 0 : 4)}px;
    bottom: 0;
    height: 2px;
    background: ${(props) => (props.$running ? "#76b9ed" : "none")};
  }
`;

const Tray = styled.div`
  margin-left: auto;
  display: flex;
  align-items: center;
  color: #fff;
`;

const TrayIcon = styled(PlainButton)`
  width: 32px;
  height: 40px;
`;

const Clock = styled.div`
  width: 66px;
  line-height: 18px;
  text-align: center;
`;

const Notice = styled(PlainButton)`
  width: 52px;
  height: 40px;
`;

const WindowsIcon = () => (
  <Icon w={16}>
    <path
      d="M0 2.3L6.6 1.4V7.6H0ZM7.4 1.3L16 0V7.6H7.4ZM0 8.4H6.6V14.6L0 13.7ZM7.4 8.4H16V16L7.4 14.7Z"
      fill="#fff"
      stroke="none"
    />
  </Icon>
);
const OfficeTile = ({ letter, dark, mid, light, size = 24 }) => (
  <Svg width={size} height={size} viewBox="0 0 24 24" $color="none">
    <rect x="6" y="1" width="18" height="22" rx="1" fill={mid} />
    <rect x="15" y="1" width="9" height="7" fill={light} />
    <rect x="6" y="16" width="18" height="7" fill={dark} />
    <rect x="0" y="5.5" width="13" height="13" rx="1" fill={dark} />
    <text x="6.5" y="16" fill="#fff" fontSize="11" fontWeight="700" textAnchor="middle">
      {letter}
    </text>
  </Svg>
);
const TeamsTile = ({ size = 28 }) => (
  <Svg width={size} height={size} viewBox="0 0 28 28" $color="none">
    <circle cx="14" cy="4" r="4" fill="#6b74dd" />
    <circle cx="21" cy="6" r="3" fill="#5059c9" />
    <path d="M8 9H25V17C25 21 21 24 16 24S8 21 8 17Z" fill="#5b62c8" />
    <rect x="1" y="7" width="13" height="13" rx="1" fill="#4049a8" />
    <path d="M4 10.5H11M7.5 10.5V17" stroke="#fff" strokeWidth="1.8" />
    <circle cx="19.5" cy="20" r="7.5" fill="#13a10e" />
    <path d="M16 20L18.5 22.5L23 17.5" stroke="#fff" strokeWidth="1.8" />
  </Svg>
);
const RingedSage = () => (
  <Icon w={24} color="#fff">
    <circle cx="12" cy="12" r="11.3" fill="#3cae4b" strokeWidth="1.3" />
    <path d="M14 7H7.5V17H16.5V13.5M10 14L16 7.5M12.5 7H17V11.5" strokeWidth="1.5" />
  </Icon>
);
const FolderTile = () => (
  <Icon w={24} color="none">
    <path d="M1 3H9L11 6H23V20H1Z" fill="#e8a824" />
    <path d="M1 7H23V20H1Z" fill="#fcd56a" />
    <path d="M4 22V14H20V22H16V18H8V22Z" fill="#3a9be8" />
  </Icon>
);
const SnipTile = () => (
  <Icon w={24} h={28} color="none">
    <ellipse cx="12" cy="10" rx="11" ry="7.5" transform="rotate(-20 12 10)" fill="#f2f2f2" />
    <path d="M2 15C0 9 8 3 14 2.5M4 12L20 5" stroke="#d24a3c" strokeWidth="1.5" />
    <path d="M13 9L18 20M20 10L14 19" stroke="#ccc" strokeWidth="2" />
    <circle cx="14" cy="20.5" r="2.3" stroke="#2b88d8" strokeWidth="1.8" />
    <circle cx="19" cy="23" r="2.3" stroke="#2b88d8" strokeWidth="1.8" />
  </Icon>
);
const ChromeTile = () => (
  <Icon w={24} color="none">
    <circle cx="12" cy="12" r="11.5" fill="#2da94f" />
    <path d="M12 12L22 6.3A11.5 11.5 0 0 1 12 23.5Z" fill="#fdd03b" />
    <path d="M12 6.5H22.2A11.5 11.5 0 0 0 2 6.3L7 14Z" fill="#e33b2e" />
    <circle cx="12" cy="12" r="5.5" fill="#fff" />
    <circle cx="12" cy="12" r="4.3" fill="#3b7ded" />
  </Icon>
);
const KTile = ({ size = 24, bare }) => (
  <Svg width={size} height={size} viewBox="0 0 24 24" $color="#f2b824" $weight={1.6}>
    {!bare && <rect width="24" height="24" fill="#000" stroke="none" />}
    <circle cx="12" cy="12" r="8" fill={bare ? "#3a2c08" : "none"} />
    <path d="M9 5V19M12 5V10L17 6.5M12 19V14L17 17.5M12 12H20M6 8V16M15 9.5L18.5 9M15 14.5L18.5 15" />
    {bare && <circle cx="18" cy="5" r="3.5" fill="#e23b1b" stroke="none" />}
  </Svg>
);
const AcrobatTile = () => (
  <Icon w={22} color="#fff">
    <rect width="22" height="22" rx="4" fill="#05050f" stroke="none" />
    <path
      d="M4 16.5C9 14.5 12 10 11 5C10 3.5 9.5 6 11 9C12.5 13 15 15 18 14C19 12.5 12 12 4 16.5Z"
      strokeWidth="1.5"
    />
  </Icon>
);
const GTile = () => (
  <Icon w={20} color="none">
    <rect width="20" height="20" rx="3" fill="#2a1468" />
    <rect width="20" height="8" rx="3" fill="#4a4fb5" />
    <path d="M14.5 6.5C12 3 5.5 5 5.5 10S12 17 14 13V10.5H10.5" stroke="#fff" strokeWidth="2.2" />
    <path d="M15 2V6M13 4H17" stroke="#fff" />
  </Icon>
);
const GearTile = () => (
  <Icon w={24} color="#7fd6d8">
    <circle cx="12" cy="12" r="10.5" strokeWidth="2.4" strokeDasharray="13 3" />
    <circle cx="12" cy="12" r="6" fill="#3aa5a8" strokeDasharray="3 1.7" strokeWidth="3" />
    <circle cx="12" cy="12" r="2.2" fill="#1c3b3c" stroke="none" />
  </Icon>
);

const OutlookTile = ({ size }) => (
  <OfficeTile letter="O" dark="#0a5fb4" mid="#1a86dc" light="#4cb4f2" size={size} />
);

const APPS = [
  { name: "Outlook", icon: <OutlookTile />, running: true },
  { name: "Teams", icon: <TeamsTile />, running: true },
  { name: "Sage 100 Contractor", icon: <RingedSage />, running: true },
  { name: "File Explorer", icon: <FolderTile />, running: true },
  { name: "Snipping Tool", icon: <SnipTile /> },
  {
    name: "Excel",
    icon: <OfficeTile letter="X" dark="#107c41" mid="#21a366" light="#33c481" />,
    running: true,
    active: true,
  },
  { name: "Chrome", icon: <ChromeTile />, running: true },
  { name: "Keeper", icon: <KTile /> },
  { name: "Acrobat", icon: <AcrobatTile />, running: true },
  {
    name: "Word",
    icon: <OfficeTile letter="W" dark="#103f91" mid="#2b7cd3" light="#41a5ee" />,
    running: true,
  },
  { name: "G", icon: <GTile />, running: true },
  { name: "Blank", icon: null, running: true },
  { name: "Settings", icon: <GearTile />, running: true },
];

const TRAY = [
  <KTile size={20} bare />,
  <Icon w={16} color="none">
    <rect width="16" height="16" fill="#3a3a3e" />
    <path d="M5 3.5H8C13 3.5 13 12.5 8 12.5H5Z" stroke="#fff" strokeWidth="2" />
  </Icon>,
  <TeamsTile size={17} />,
  <Icon w={16} color="none">
    <path d="M4 0L8 3L4 6L0 3ZM12 0L16 3L12 6L8 3ZM12 6L16 9L12 12L8 9Z" fill="#fff" />
    <circle cx="4.5" cy="11.5" r="4.5" fill="#e23b1b" />
    <path d="M3.5 10L5 9V14" stroke="#fff" />
  </Icon>,
  <Icon w={16} color="#ddd">
    <circle cx="8" cy="8" r="7" fill="#777" strokeWidth="1.5" />
    <path d="M11 5C7 3 4 6 8 8S9 13 5 11" strokeWidth="1.5" />
  </Icon>,
  <Icon w={16} color="#ddd" weight={2.2}>
    <path d="M1.5 12V2L8 10V1M8 8L15 15M15 8L8 15" />
  </Icon>,
  <OutlookTile size={17} />,
  <Icon w={12} h={17} color="#fff">
    <path d="M3.5 5.5V0.5H8.5V5.5M2.5 5.5H9.5V10M2.5 5.5V15.5H6M7 13.5L9 15.5L12 11.5" />
  </Icon>,
  <Icon w={16} color="none">
    <path d="M8 0L15 2V8C15 12 11 15 8 16C5 15 1 12 1 8V2Z" fill="#fff" />
    <path d="M8 0V16M1 7.5H15" stroke="#222" />
    <circle cx="12" cy="11.5" r="4.5" fill="#13a10e" />
    <path d="M10 11.5L11.5 13L14 10" stroke="#fff" />
  </Icon>,
  <Icon w={16} h={14} color="#fff">
    <path d="M4.5 4.5H15.5V12.5H4.5Z" />
    <path d="M7 6.5H13.5V10.5H7Z" fill="#fff" />
    <path d="M0.5 2V5H4V2M1.5 0V2M3.5 0V2M2.5 5V9H4" />
  </Icon>,
  <Icon w={17} h={15} color="#fff">
    <path d="M5.5 3.5H16.5V10.5H5.5ZM11 10.5V14M7 14.5H14M0.5 0.5H4.5V4.5H0.5ZM2.5 4.5V14H6" />
  </Icon>,
  <Icon w={17} h={15} color="#fff">
    <path d="M0.5 5.5H3L7 2V13L3 9.5H0.5ZM9.5 5C10.5 6.5 10.5 8.5 9.5 10M12 3.5C14 6 14 9 12 11.5M14.5 1.5C17.5 5 17.5 10 14.5 13.5" />
  </Icon>,
  <Icon w={10} h={17} color="#fff">
    <rect x="2.5" y="0.5" width="5" height="11" rx="2.5" fill="#fff" />
    <path d="M0.5 8C0.5 15 9.5 15 9.5 8M5 13V16.5M2.5 16.5H7.5" />
  </Icon>,
];

const SHORTCUT_ART = [
  <Icon w={42} h={40} color="#444">
    <path d="M33 6H38V22H33Z" fill="#b0522a" stroke="#6a2b12" />
    <path d="M8 18L21 5L34 18V40H8Z" fill="#ccc" />
    <path d="M2 22L21 4L40 22" stroke="#444" strokeWidth="5" />
    <path d="M2 22L21 4L40 22" stroke="#8a8a8a" strokeWidth="2" />
    <path d="M12 19H30V22H12Z" fill="#c85a24" stroke="none" />
    <path d="M17 19H25V22H17Z" fill="#8fd0c0" stroke="none" />
  </Icon>,
  <Icon w={62} h={40} color="#888">
    <path d="M1 1.5H28L34 8V40H1Z" fill="#fff" />
    <path d="M5 7H14M5 11H12" stroke="#a9cdf0" strokeWidth="3" />
    <path d="M4 30V14.5H9" stroke="#3cae4b" />
    <path d="M9 7.5H34L41 15V40H9Z" fill="#fff" />
    <path d="M34 7.5V15H41" />
    <path d="M13 12H24M13 16H20" stroke="#a9cdf0" strokeWidth="3" />
    <path d="M13 19.5H38" stroke="#3cae4b" strokeWidth="2" />
  </Icon>,
  <Icon w={62} h={40} color="#888">
    <path d="M1 1.5H26V40H1Z" fill="#fff" />
    <path d="M5 7H14" stroke="#a9cdf0" strokeWidth="3" />
    <path d="M4 14H8V30H4Z" fill="#e0a040" stroke="#8a4a10" />
    <path d="M8 6.5H32L40 13V40H8Z" fill="#fff" />
    <path d="M11 10H20" stroke="#a9cdf0" strokeWidth="3" />
    <path d="M11 16H15V30H11Z" fill="#e0a040" stroke="#8a4a10" />
    <path d="M15 11.5H40L47 18V40H15Z" fill="#fff" />
    <path d="M19 15H29M19 19H26" stroke="#a9cdf0" strokeWidth="3" />
  </Icon>,
  <Icon w={50} h={40} color="#888">
    <path d="M30 8.5H49V40H30Z" fill="#fff" />
    <path d="M36 15H43V25H36Z" stroke="#8fb0e8" />
    <path d="M1 24C1 10 8 5 13 4V2H21V4C29 7 33 13 34 24Z" fill="#fcc846" stroke="#c88a18" />
    <path d="M13 4V20M21 4V20M8 8C6 12 6 16 6 20" stroke="#e09a20" />
  </Icon>,
  <Icon w={62} h={40} color="#999">
    <path d="M1 1.5H56V40H1Z" fill="#fff" />
    <path d="M3 4H9V18H3ZM12 4H52V8H12Z" fill="#f9cf2a" stroke="#b8690f" />
    <path d="M6 7.5H61V40H6Z" fill="#fff" />
    <path d="M9 11H16V22H9ZM19 10.5H58V24H19Z" fill="#fbe07a" stroke="#b8690f" />
    <path d="M19 12.5H58" stroke="#f5b800" strokeWidth="4" />
    <path d="M19 17.5H58M27 14V24M35 14V24M43 14V24M51 14V24" stroke="#c98a1c" />
  </Icon>,
  <Icon w={62} h={40} color="#888">
    <path d="M4 1.5H46V40H4Z" fill="#fff" />
    <path d="M15 9.5H40V20H15Z" fill="#e8b86a" stroke="#8a5a18" />
    <path d="M19 15.5H61V40H19Z" fill="#fff" />
    <path d="M1 4H6M1 8H6M1 12H6M1 16H6M16 18H22M16 21H22" strokeWidth="2" />
  </Icon>,
];

const FOOTER_BUTTONS = [
  ["Live Chat", 86],
  ["Messages", 86],
  ["Help", 78],
  ["Hide Menu", 93],
  ["Settings", 78],
  ["Dashboard", 93],
  ["Calendar", 83],
  ["Calculator", 88],
];

/* ---------- components ---------- */

function SageShell() {
  const [tab, setTab] = useState(0);
  return (
    <>
      <SageTitle>
        <SageMark />
        Sage 100 Contractor 2024
        <WindowButtons $w={46}>
          <PlainButton aria-label="Minimize"><MinIcon color="#8a8a8a" /></PlainButton>
          <PlainButton aria-label="Restore"><RestoreIcon color="#8a8a8a" /></PlainButton>
          <PlainButton aria-label="Close"><CloseIcon color="#8a8a8a" /></PlainButton>
        </WindowButtons>
      </SageTitle>
      <SageHeader>
        <SageLogo />
        <Shortcuts>
          {SHORTCUT_ART.map((art, i) => (
            <Shortcut key={i} aria-label={`Shortcut ${i + 1}`}>{art}</Shortcut>
          ))}
        </Shortcuts>
        <Arrows>
          <ArrowButton aria-label="Forward"><ArrowArt /></ArrowButton>
          <ArrowButton aria-label="Back"><ArrowArt flip /></ArrowButton>
        </Arrows>
      </SageHeader>
      <SageBody>
        <Side>
          <SideTabs>
            {["System Menu", "My Menu"].map((name, i) => (
              <SideTab key={name} $active={tab === i} onClick={() => setTab(i)}>
                {name}
              </SideTab>
            ))}
          </SideTabs>
          <SidePage>
            <Tree>
              {MENU.map((name, i) => (
                <TreeItem key={name}>
                  <Icon w={6} h={9} color="#8a8a8a">
                    <path d="M0.5 0.5L5 4.5L0.5 8.5Z" fill="#fff" />
                  </Icon>
                  <div>
                    {i + 1}
                    <span> - </span>
                    {name}
                  </div>
                </TreeItem>
              ))}
            </Tree>
          </SidePage>
        </Side>
        <Canvas />
      </SageBody>
      <Footer>
        <FooterButtons>
          {FOOTER_BUTTONS.map(([name, w]) => (
            <FooterButton key={name} $w={w} $bold={name === "Live Chat"}>
              {name}
              {name === "Messages" && <Badge>1</Badge>}
            </FooterButton>
          ))}
        </FooterButtons>
        <LoginLine>
          <span>You are logged in to WOLC-DEVNW as wolcottplumbing\ehicks</span>
          <a href="#access">Change Company/Access</a>
        </LoginLine>
      </Footer>
    </>
  );
}

function ExcelTitle({ file }) {
  const tint = "#5fb587";
  return (
    <Title>
      <TitleLeft>
        <ExcelMark />
        <AutoSave>
          AutoSave
          <Toggle type="button">Off</Toggle>
        </AutoSave>
        <SaveTool aria-label="Save"><SaveIcon /></SaveTool>
        <TitleTool aria-label="Undo"><UndoIcon /></TitleTool>
        <Chevron color={tint} />
        <TitleTool aria-label="Redo"><RedoIcon /></TitleTool>
        <Chevron color={tint} />
        <TitleTool aria-label="Customize"><CustomizeIcon /></TitleTool>
        <FileName>
          {file}
          <Chevron color={tint} big />
        </FileName>
      </TitleLeft>
      <TitleSearch>
        <SearchIcon color="#4fa878" weight={1.1} />
        <input placeholder="Search" aria-label="Search" />
      </TitleSearch>
      <Avatar>EH</Avatar>
      <ExcelButtons $w={48}>
        <PlainButton aria-label="Minimize"><MinIcon color={tint} /></PlainButton>
        <PlainButton aria-label="Maximize"><MaxIcon color={tint} /></PlainButton>
        <PlainButton aria-label="Close"><CloseIcon color={tint} /></PlainButton>
      </ExcelButtons>
    </Title>
  );
}

function Select({ w, value, label }) {
  return (
    <SelectBox $w={w}>
      <select aria-label={label} defaultValue={value}>
        <option>{value}</option>
      </select>
      <Chevron />
    </SelectBox>
  );
}

function RibbonGroup({ name, w, launcher, justify, children }) {
  return (
    <Group $w={w} $justify={justify}>
      {children}
      {name && <GroupName $launcher={launcher}>{name}</GroupName>}
      {launcher && <Launcher aria-label={`${name} settings`}><LauncherIcon /></Launcher>}
    </Group>
  );
}

function HomeRibbon() {
  return (
    <Ribbon>
      <RibbonGroup name="Clipboard" w={112} launcher>
        <BigTool $w={48} $left={9}>
          <PasteIcon />
          <span>Paste</span>
          <Chevron />
        </BigTool>
        <ToolColumn $pad="0" $gap={2}>
          <Tool $w={22} aria-label="Cut"><CutIcon /></Tool>
          <Tool $w={22} aria-label="Copy"><CopyIcon /></Tool>
          <Tool $w={22} aria-label="Format Painter"><BrushIcon /></Tool>
        </ToolColumn>
        <ToolColumn $pad="25px 0 0 0">
          <Tool $w={24} aria-label="Copy options"><Chevron /></Tool>
        </ToolColumn>
      </RibbonGroup>

      <RibbonGroup name="Font" w={236} launcher>
        <ToolColumn $gap={8}>
          <ToolRow>
            <Select w={123} value="Aptos Narrow" label="Font" />
            <Select w={43} value="11" label="Font size" />
            <Tool aria-label="Increase font size"><GrowA /></Tool>
            <Tool aria-label="Decrease font size"><ShrinkA /></Tool>
          </ToolRow>
          <ToolRow>
            <Tool $w={24}><b>B</b></Tool>
            <Tool $w={26}><i>I</i></Tool>
            <Tool $w={26}><u>U</u></Tool>
            <Tool $w={12} aria-label="Underline options"><Chevron /></Tool>
            <Rule />
            <Tool $w={32} aria-label="Borders"><BordersIcon /></Tool>
            <Tool $w={14} aria-label="Border options"><Chevron /></Tool>
            <Rule />
            <Tool $w={30} aria-label="Fill color"><BucketIcon /></Tool>
            <Tool $w={12} aria-label="Fill options"><Chevron /></Tool>
            <Tool $w={30} aria-label="Font color"><FontColorIcon /></Tool>
            <Tool $w={10} aria-label="Font color options"><Chevron /></Tool>
          </ToolRow>
        </ToolColumn>
      </RibbonGroup>

      <RibbonGroup name="Alignment" w={205} launcher>
        <ToolColumn $gap={8} $pad="7px 0 0 7px">
          <ToolRow>
            <Tool aria-label="Top align"><Lines rows={MIDDLE} top={0} /></Tool>
            <Tool aria-label="Middle align"><Lines rows={MIDDLE} top={2} /></Tool>
            <Tool $w={24} $on aria-label="Bottom align"><Lines rows={MIDDLE} top={4} /></Tool>
            <Tool $w={30} aria-label="Orientation"><OrientIcon /></Tool>
            <Tool $w={6} aria-label="Orientation options"><Chevron /></Tool>
          </ToolRow>
          <ToolRow>
            <Tool aria-label="Align left"><Lines rows={LEFT} /></Tool>
            <Tool aria-label="Center"><Lines rows={CENTER} /></Tool>
            <Tool aria-label="Align right"><Lines rows={RIGHT} /></Tool>
            <Tool aria-label="Decrease indent"><IndentIcon /></Tool>
            <Tool aria-label="Increase indent"><IndentIcon flip /></Tool>
          </ToolRow>
        </ToolColumn>
        <ToolColumn $pad="6px 0 0 4px">
          <Rule $h={62} />
        </ToolColumn>
        <ToolColumn $gap={8} $pad="7px 0 0 3px">
          <ToolRow>
            <Tool $w={32} aria-label="Wrap text"><WrapIcon /></Tool>
          </ToolRow>
          <ToolRow>
            <Tool $w={32} aria-label="Merge and center"><MergeIcon /></Tool>
            <Tool $w={16} aria-label="Merge options"><Chevron /></Tool>
          </ToolRow>
        </ToolColumn>
      </RibbonGroup>

      <RibbonGroup name="Number" w={161} launcher>
        <ToolColumn $gap={8}>
          <ToolRow>
            <Select w={146} value="General" label="Number format" />
          </ToolRow>
          <ToolRow>
            <Tool $w={22} $size={16}>$</Tool>
            <Tool $w={16} aria-label="Currency options"><Chevron /></Tool>
            <Tool $w={30} $size={16}>%</Tool>
            <Tool $w={24} aria-label="Comma style">
              <Icon w={7} h={13} color="none">
                <path
                  d="M3.5 0A3.5 3.5 0 0 1 7 4C7 9 4 12 0.5 13C3 10.5 3.5 9 3.5 7A3.5 3.5 0 0 1 3.5 0Z"
                  fill="#333"
                />
              </Icon>
            </Tool>
            <Rule />
            <Tool $w={28} aria-label="Increase decimal"><DecimalIcon /></Tool>
            <Tool $w={26} aria-label="Decrease decimal"><DecimalIcon less /></Tool>
          </ToolRow>
        </ToolColumn>
      </RibbonGroup>

      <RibbonGroup name="Styles" w={185}>
        <ToolColumn $pad="0 0 0 13px" $gap={2}>
          <TextTool><CondIcon /><span>Conditional Formatting</span><Chevron /></TextTool>
          <TextTool><PaintTableIcon /><span>Format as Table</span><Chevron /></TextTool>
          <TextTool><PaintTableIcon full /><span>Cell Styles</span><Chevron /></TextTool>
        </ToolColumn>
      </RibbonGroup>

      <RibbonGroup name="Cells" w={106}>
        <ToolColumn $pad="0 0 0 12px" $gap={2}>
          <TextTool $min={42}><CellInsertIcon /><span>Insert</span><Chevron /></TextTool>
          <TextTool $min={46}><CellDeleteIcon /><span>Delete</span><Chevron /></TextTool>
          <TextTool><CellFormatIcon /><span>Format</span><Chevron /></TextTool>
        </ToolColumn>
      </RibbonGroup>

      <RibbonGroup name="Editing" w={157}>
        <ToolColumn $pad="0 0 0 11px" $gap={2}>
          <ToolRow>
            <Tool $w={18} aria-label="AutoSum"><SumIcon /></Tool>
            <Tool $w={28} aria-label="AutoSum options"><Chevron /></Tool>
          </ToolRow>
          <ToolRow>
            <Tool $w={18} aria-label="Fill"><FillIcon /></Tool>
            <Tool $w={14} aria-label="Fill options"><Chevron /></Tool>
          </ToolRow>
          <ToolRow>
            <Tool $w={18} aria-label="Clear"><EraserIcon /></Tool>
            <Tool $w={14} aria-label="Clear options"><Chevron /></Tool>
          </ToolRow>
        </ToolColumn>
        <BigTool $w={44} $gap={2} $top={6}>
          <SortIcon />
          <div>
            Sort &amp;
            <span>Filter <Chevron /></span>
          </div>
        </BigTool>
        <BigTool $w={46} $left={1} $gap={2} $top={5}>
          <FindIcon />
          <div>
            Find &amp;
            <span>Select <Chevron /></span>
          </div>
        </BigTool>
      </RibbonGroup>

      <RibbonGroup name="Sensitivity" w={74} justify="center">
        <BigTool $w={70} $off $top={2} $gap={3}>
          <SensitivityIcon />
          <span>Sensitivity</span>
          <Chevron color="#bdbdbd" />
        </BigTool>
      </RibbonGroup>

      <RibbonGroup name="Add-ins" w={63} justify="center">
        <BigTool $w={60} $gap={5}>
          <AddinsIcon />
          <span>Add-ins</span>
        </BigTool>
      </RibbonGroup>

      <RibbonGroup w={62} justify="center">
        <BigTool $w={60} $gap={5}>
          <AnalyzeIcon />
          <div>
            Analyze
            <br />
            Data
          </div>
        </BigTool>
      </RibbonGroup>

      <CollapseRibbon aria-label="Collapse ribbon"><Chevron big /></CollapseRibbon>
    </Ribbon>
  );
}

function SheetTable() {
  return (
    <Sheet>
      <colgroup>
        <col />
        {COLUMNS.map((c) => (
          <col key={c} />
        ))}
      </colgroup>
      <thead>
        <tr>
          <ColHead aria-label="Select all">
            <Icon w={24} h={14}>
              <path d="M22 1V13H10Z" fill="#b4b4b4" stroke="none" />
            </Icon>
          </ColHead>
          {COLUMNS.map((c) => (
            <ColHead key={c} $on={c === "K"}>{c}</ColHead>
          ))}
        </tr>
      </thead>
      <tbody>
        {ROWS.map((row, r) => (
          <tr key={r}>
            <RowHead $on={r === 1}>{r + 1}</RowHead>
            {row.map((value, c) => {
              const picked = r === 1 && c === 10;
              return (
                <Cell key={c} $num={typeof value === "number"} $picked={picked}>
                  {value}
                  {picked && <FillHandle />}
                </Cell>
              );
            })}
          </tr>
        ))}
      </tbody>
    </Sheet>
  );
}

function FrontExcel() {
  const [tab, setTab] = useState("Home");
  return (
    <ExcelWindow>
      <ExcelTitle file="PRXH0EPI.csv" />
      <TabsBar>
        {RIBBON_TABS.map((name) => (
          <RibbonTab key={name} $active={tab === name} onClick={() => setTab(name)}>
            {name}
          </RibbonTab>
        ))}
        <TopAction><CommentIcon />Comments</TopAction>
        <TopAction $share><ShareIcon />Share<Chevron color="#fff" /></TopAction>
      </TabsBar>
      <HomeRibbon />
      <FormulaRow>
        <FieldBox>
          <input aria-label="Name box" defaultValue="K2" />
          <Chevron big />
        </FieldBox>
        <Dots><DotsIcon /></Dots>
        <FieldBox $w={86} $tight>
          <Icon w={12} color="#b0b0b0">
            <path d="M0.5 0.5L11.5 11.5M11.5 0.5L0.5 11.5" />
          </Icon>
          <Tool $w={34} aria-label="Enter">
            <Icon w={16} h={11} color="#b0b0b0"><path d="M0.5 6L5 10.5L15.5 0.5" /></Icon>
          </Tool>
          <FxIcon>fx</FxIcon>
          <Tool $w={16} aria-label="Function options"><Chevron big color="#999" /></Tool>
        </FieldBox>
        <FormulaInput>
          <input aria-label="Formula" />
          <Icon w={10} h={6} color="#333" weight={1.3}>
            <path d="M0.5 5.5L5 1L9.5 5.5" />
          </Icon>
        </FormulaInput>
      </FormulaRow>
      <SheetArea>
        <SheetClip>
          <SheetTable />
        </SheetClip>
        <VScroll>
          <Icon w={9} h={7}><path d="M4.5 0L9 7H0Z" fill="#6e6e6e" stroke="none" /></Icon>
          <VThumb />
          <Icon w={9} h={7}><path d="M4.5 7L9 0H0Z" fill="#6e6e6e" stroke="none" /></Icon>
        </VScroll>
      </SheetArea>
      <TabStrip>
        <Icon w={6} h={9} color="#999"><path d="M5.5 0.5L1 4.5L5.5 8.5" /></Icon>
        <Dots $w={27} />
        <Icon w={6} h={9} color="#999"><path d="M0.5 0.5L5 4.5L0.5 8.5" /></Icon>
        <SheetTab><span>PRXH0EPI</span></SheetTab>
        <Rule $h={18} />
        <NewSheet aria-label="New sheet">
          <Icon w={11} color="#333"><path d="M5.5 0V11M0 5.5H11" /></Icon>
        </NewSheet>
        <Dots $w={32}><DotsIcon /></Dots>
        <HScroll>
          <Icon w={6} h={9}><path d="M6 0V9L0 4.5Z" fill="#6e6e6e" stroke="none" /></Icon>
          <div />
          <Icon w={6} h={9}><path d="M0 0V9L6 4.5Z" fill="#6e6e6e" stroke="none" /></Icon>
        </HScroll>
      </TabStrip>
      <StatusBar>
        Select destination and press ENTER or choose Paste
        <StatusTools>
          <ViewButton $on aria-label="Normal view">
            <Icon w={13} color="#222">
              <path d="M0.5 0.5H12.5V12.5H0.5ZM4.5 0.5V12.5M8.5 0.5V12.5M0.5 4.5H12.5M0.5 8.5H12.5" />
            </Icon>
          </ViewButton>
          <ViewButton aria-label="Page layout view">
            <Icon w={13} color="#222">
              <path d="M0.5 0.5H12.5V12.5H0.5ZM3.5 2.5H9.5V10.5H3.5ZM5 4.5H8M5 6.5H8M5 8.5H8" />
            </Icon>
          </ViewButton>
          <ViewButton aria-label="Page break view">
            <Icon w={13} color="#222">
              <path d="M0.5 0.5H12.5V12.5H0.5ZM4.5 0.5V7.5H8.5V0.5" />
            </Icon>
          </ViewButton>
          <ZoomBox>
            <PlainButton aria-label="Zoom out">
              <Icon w={8} color="#333"><path d="M0 3.5H8" /></Icon>
            </PlainButton>
            <ZoomRange type="range" aria-label="Zoom" defaultValue={50} />
            <PlainButton aria-label="Zoom in">
              <Icon w={8} color="#333"><path d="M0 3.5H8M4 0V8" /></Icon>
            </PlainButton>
          </ZoomBox>
          100%
        </StatusTools>
      </StatusBar>
    </ExcelWindow>
  );
}

function BackExcel() {
  return (
    <ExcelWindow $back>
      <ExcelTitle file="JMonthly Reports - copy-Refresh" />
      <BackRibbon />
      <FormulaRow>
        <FieldBox>
          <input aria-label="Back name box" defaultValue="H4" />
        </FieldBox>
      </FormulaRow>
      <BackCorner>
        <Icon w={13} h={13}><path d="M13 0V12H0Z" fill="#b4b4b4" stroke="none" /></Icon>
      </BackCorner>
      <BackRows>
        {Array.from({ length: 30 }, (_, i) => (
          <BackRow key={i} $on={i === 3}>{i + 1}</BackRow>
        ))}
      </BackRows>
      <BackStatus>Select destination</BackStatus>
    </ExcelWindow>
  );
}

function FindReplace() {
  const [find, setFind] = useState("TRNST-OR");
  const [replace, setReplace] = useState("");
  return (
    <Dialog onSubmit={(e) => e.preventDefault()}>
      <DialogTitle>
        Find and Replace
        <WindowButtons $w={46}>
          <PlainButton type="button" aria-label="Minimize"><MinIcon color="#e0e0e0" /></PlainButton>
          <PlainButton type="button" aria-label="Maximize"><MaxIcon color="#777" /></PlainButton>
          <PlainButton type="button" aria-label="Close"><CloseIcon color="#777" /></PlainButton>
        </WindowButtons>
      </DialogTitle>
      <DialogTabs>
        <DialogTab type="button">Fin<u>d</u></DialogTab>
        <DialogTab type="button" $active>Re<u>p</u>lace</DialogTab>
      </DialogTabs>
      <DialogPage>
        <Field>
          <label htmlFor="find">Fi<u>n</u>d what:</label>
          <Combo>
            <input id="find" value={find} onChange={(e) => setFind(e.target.value)} />
            <ComboArrow type="button" aria-label="Find history">
              <Chevron color="#555" big />
            </ComboArrow>
          </Combo>
        </Field>
        <Field>
          <label htmlFor="replace">R<u>e</u>place with:</label>
          <Combo>
            <input id="replace" value={replace} onChange={(e) => setReplace(e.target.value)} />
            <ComboArrow type="button" aria-label="Replace history">
              <Chevron color="#555" big />
            </ComboArrow>
          </Combo>
        </Field>
        <OptionsRow>
          <DialogButton type="button" $w={78}>Op<u>t</u>ions &gt;&gt;</DialogButton>
        </OptionsRow>
      </DialogPage>
      <DialogActions>
        <DialogButton $primary>Replace <u>A</u>ll</DialogButton>
        <DialogButton type="button"><u>R</u>eplace</DialogButton>
        <DialogButton type="button">F<u>i</u>nd All</DialogButton>
        <DialogButton type="button"><u>F</u>ind Next</DialogButton>
        <DialogButton type="button">Close</DialogButton>
      </DialogActions>
    </Dialog>
  );
}

function WindowsTaskbar() {
  return (
    <Taskbar>
      <StartButton aria-label="Start"><WindowsIcon /></StartButton>
      <TaskSearch>
        <SearchIcon w={16} color="#222" weight={1.2} />
        <input placeholder="Type here to search" aria-label="Type here to search" />
      </TaskSearch>
      <Apps>
        {APPS.map((app) => (
          <AppButton
            key={app.name}
            aria-label={app.name}
            $active={app.active}
            $running={app.running}
          >
            {app.icon}
          </AppButton>
        ))}
      </Apps>
      <Tray>
        {TRAY.map((icon, i) => (
          <TrayIcon key={i} aria-label={`Tray ${i + 1}`}>{icon}</TrayIcon>
        ))}
        <Clock>
          2:34 PM
          <br />
          8/5/2025
        </Clock>
        <Notice aria-label="Notifications">
          <Icon w={28} h={28} color="none">
            <path d="M0 2H16V16H8L4 20V16H0Z" fill="#fff" />
            <path d="M3 5.5H13M3 8.5H13M3 11.5H10" stroke="#222" />
            <circle cx="16" cy="20" r="9" fill="#333" stroke="#888" />
            <text x="16" y="24" fill="#fff" fontSize="12" textAnchor="middle">20</text>
          </Icon>
        </Notice>
      </Tray>
    </Taskbar>
  );
}

export default function App() {
  return (
    <Desktop>
      <GlobalStyle />
      <SageShell />
      <WindowsTaskbar />
      <BackExcel />
      <FrontExcel />
      <FindReplace />
    </Desktop>
  );
}
